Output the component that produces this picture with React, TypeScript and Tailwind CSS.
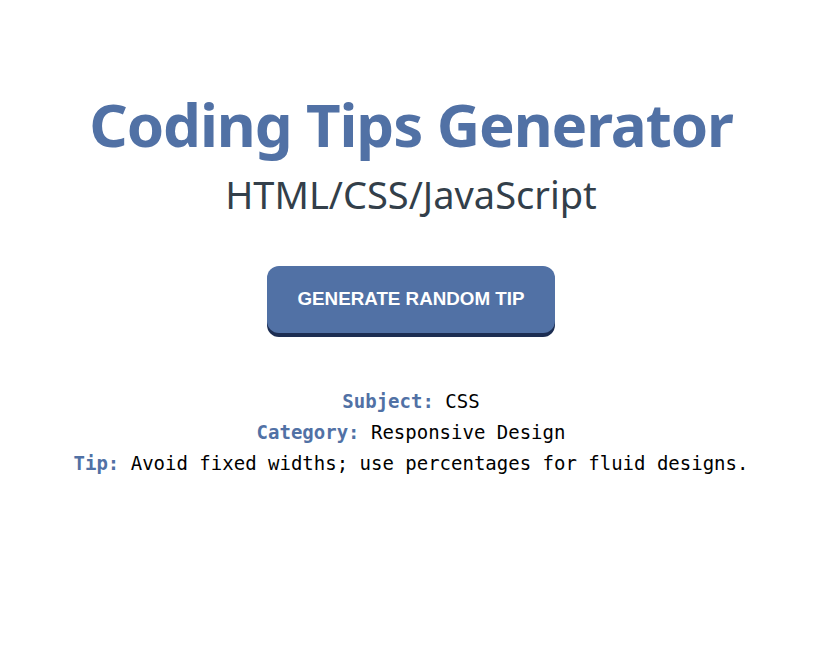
export default function App() {
  return (
    <div className="min-h-screen bg-white flex flex-col items-center pt-[88px] pl-[9px]">
      <h1
        className="text-[#5171a5] text-[60px] font-bold leading-[72px] tracking-[-1.1px]"
        style={{ fontFamily: '"Noto Sans", sans-serif' }}
      >
        Coding Tips Generator
      </h1>
      <h2
        className="text-[#333f4a] text-[38px] leading-[48px] mt-[10px] tracking-[0px]"
        style={{ fontFamily: '"Noto Sans", sans-serif' }}
      >
        HTML/CSS/JavaScript
      </h2>
      <button
        className="mt-[48px] w-[288px] h-[67px] rounded-[12px] bg-[#5171a5] text-white text-[18.8px] font-bold shadow-[0_4px_0_#1c2d52] uppercase"
        style={{ fontFamily: '"Liberation Sans", Arial, sans-serif' }}
      >
        Generate Random Tip
      </button>
      <div
        className="mt-[53px] flex flex-col items-center text-[19px] leading-[31px] text-black"
        style={{ fontFamily: '"DejaVu Sans Mono", monospace' }}
      >
        <p>
          <span className="font-bold text-[#5171a5]">Subject:</span> CSS
        </p>
        <p>
          <span className="font-bold text-[#5171a5]">Category:</span> Responsive Design
        </p>
        <p>
          <span className="font-bold text-[#5171a5]">Tip:</span> Avoid fixed widths; use percentages for fluid designs.
        </p>
      </div>
    </div>
  );
}
